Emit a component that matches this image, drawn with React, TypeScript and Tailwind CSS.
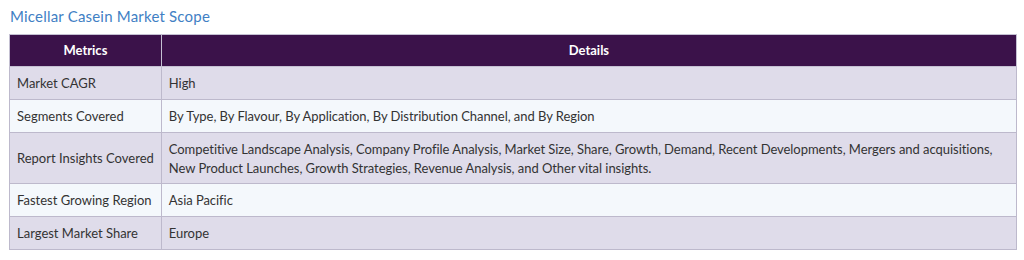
import React from "react";

const rows: { m: string; d: React.ReactNode; h: string; bg: string }[] = [
  { m: "Market CAGR", d: "High", h: "h-[33px]", bg: "bg-[#dfdcea]" },
  {
    m: "Segments Covered",
    d: "By Type, By Flavour, By Application, By Distribution Channel, and By Region",
    h: "h-[33px]",
    bg: "bg-[#f4f8fc]",
  },
  {
    m: "Report Insights Covered",
    d: (
      <>
        Competitive Landscape Analysis, Company Profile Analysis, Market Size, Share, Growth, Demand, Recent Developments, Mergers and acquisitions,
        <br />
        New Product Launches, Growth Strategies, Revenue Analysis, and Other vital insights.
      </>
    ),
    h: "h-[51px]",
    bg: "bg-[#dfdcea]",
  },
  { m: "Fastest Growing Region", d: "Asia Pacific", h: "h-[33px]", bg: "bg-[#f4f8fc]" },
  { m: "Largest Market Share", d: "Europe", h: "h-[33px]", bg: "bg-[#dfdcea]" },
];

export default function App() {
  return (
    <div className="w-[1024px] h-[260px] bg-white pl-[9px] pt-[5px] font-['Lato','Noto_Sans',sans-serif]">
      <div className="pl-[1px] text-[15px] leading-[22px] text-[#3f80c4] h-[29px] tracking-[0.2px]">Micellar Casein Market Scope</div>
      <table className="w-[1008px] border-collapse text-[13px] text-[#333]">
        <thead>
          <tr className="h-[32px] bg-[#3b124a] text-white">
            <th className="w-[151px] border border-[#c4c0d2] font-bold text-center">Metrics</th>
            <th className="border border-[#c4c0d2] font-bold text-center">Details</th>
          </tr>
        </thead>
        <tbody>
          {rows.map((r) => (
            <tr key={r.m} className={`${r.h} ${r.bg}`}>
              <td className="border border-[#bdb9cc] px-[7px] pt-[1px] align-middle whitespace-nowrap">{r.m}</td>
              <td className="border border-[#bdb9cc] px-[7px] pt-[1px] align-middle leading-[19px] tracking-[-0.05px]">{r.d}</td>
            </tr>
          ))}
        </tbody>
      </table>
    </div>
  );
}
